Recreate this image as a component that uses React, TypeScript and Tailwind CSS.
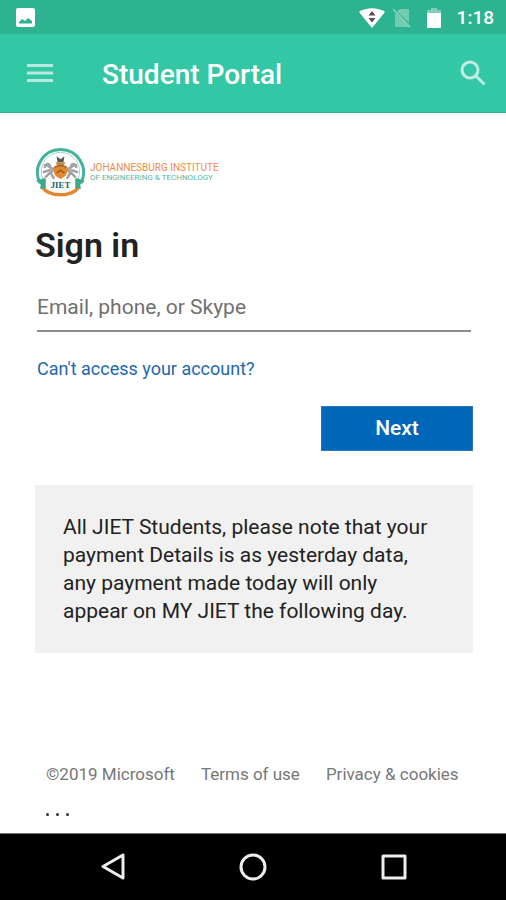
import React from "react";

const footerLinks = ["Terms of use", "Privacy & cookies"];

function PictureIcon() {
  return (
    <svg className="h-5 w-5" viewBox="0 0 20 20" aria-hidden="true">
      <path fill="#fff" fillRule="evenodd" d="M2 0h15a2 2 0 0 1 2 2v15a2 2 0 0 1-2 2H2a2 2 0 0 1-2-2V2A2 2 0 0 1 2 0ZM3 15.500h13v-2.500l-4-3-3 3-3-2-3 3Z" />
    </svg>
  );
}

function WifiIcon() {
  return (
    <svg className="h-5 w-[26px]" viewBox="0 0 26 20" aria-hidden="true">
      <path fill="#fff" d="M0 4C7-1 19-1 26 4L13 20Z" />
      <path fill="#5b4a50" d="M9.500 7.500 13 3l3.500 4.500ZM9.500 10h7l-3.500 4.500Z" />
    </svg>
  );
}

function NoSimIcon() {
  return (
    <svg className="h-5 w-[18px]" viewBox="0 0 18 20" aria-hidden="true">
      <path fill="#73cbb2" d="M7 1h9v14L4 3.500ZM2 5l14 13v1H2Z" />
      <path stroke="#8ad5c0" strokeWidth="1.500" d="M0 1l17 18" />
    </svg>
  );
}

function BatteryIcon() {
  return (
    <svg className="h-5 w-[14px]" viewBox="0 0 14 20" aria-hidden="true">
      <path fill="#82d0bb" d="M4 0h6v2h4v4H0V2h4Z" />
      <path fill="#fff" d="M0 5h14v14a1 1 0 0 1-1 1H1a1 1 0 0 1-1-1Z" />
    </svg>
  );
}

function Crest() {
  return (
    <svg className="h-[51px] w-[51px] shrink-0" viewBox="0 0 52 51" aria-hidden="true">
      <circle cx="26" cy="25" r="22" fill="#fff" />
      <path d="M5 36A23.500 23.500 0 1 1 47 36" fill="none" stroke="#45b29a" strokeWidth="3" />
      <path d="M8 32A19.500 19.500 0 1 1 44 32" fill="none" stroke="#9cd6c8" strokeWidth="1" />
      <path d="M7 40c8 11 30 11 38 0" fill="none" stroke="#e2852f" strokeWidth="3.500" />
      <path d="M1 34l9-3 3 4v6l-8 1 1-4ZM51 34l-9-3-3 4v6l8 1-1-4Z" fill="#3fa98f" />
      <g fill="none" stroke="#a2a2a6" strokeWidth="2.500" strokeLinecap="round">
        <path d="M10 20c2-5 6-3 5 0l4 2-3 4 3 5M9 25l6-2M11 30l4-4M10 18l4 1" />
        <path d="M42 20c-2-5-6-3-5 0l-4 2 3 4-3 5M43 25l-6-2M41 30l-4-4M42 18l-4 1" />
      </g>
      <path d="M22 9l4 3 4-3-1 6h-6Z" fill="#555" />
      <path d="M21 15h10l-2 4h-6Z" fill="#b98b4d" />
      <path d="M19 20c4-3 10-3 14 0 1 7-2 10-7 12-5-2-8-5-7-12Z" fill="#e58a2c" />
      <path d="M20 20c4-2 8-2 12 0M22 26l4-3 4 3" fill="none" stroke="#8a5a31" strokeWidth="1.500" />
      <path d="M11 33q15 3 30 0v8q-15 3-30 0Z" fill="#fff" />
      <text x="26" y="41" textAnchor="middle" fontSize="9" fontWeight="700" fill="#285d58" fontFamily="Liberation Serif, serif">JIET</text>
    </svg>
  );
}

export default function App() {
  return (
    <div className="flex min-h-screen flex-col bg-white font-['Roboto',sans-serif] text-[#222]">
      <div className="flex h-[34px] items-center justify-between bg-[#2eb392] pt-0.5 pr-3 pl-4 text-white">
        <PictureIcon />
        <div className="flex items-center">
          <WifiIcon />
          <div className="ml-2 flex"><NoSimIcon /></div>
          <div className="ml-4 flex"><BatteryIcon /></div>
          <span className="ml-4 text-[19px] leading-6 font-medium">1:18</span>
        </div>
      </div>

      <header className="flex h-[79px] items-center border-b border-[#2bb795] bg-[#33c7a6] px-5">
        <button type="button" aria-label="Menu" className="flex w-10 justify-center">
          <svg className="h-5 w-[26px]" viewBox="0 0 26 20" aria-hidden="true">
            <path stroke="#b9eadf" strokeWidth="3" d="M0 2.500h26M0 10h26M0 17.500h26" />
          </svg>
        </button>
        <h1 className="ml-[42px] flex-1 pt-1 text-[28px] leading-8 font-medium text-white">Student Portal</h1>
        <button type="button" aria-label="Search" className="flex">
          <svg className="h-[26px] w-[26px]" viewBox="0 0 26 26" fill="none" stroke="#c0ece1" strokeWidth="3" aria-hidden="true">
            <circle cx="10" cy="10" r="8" />
            <path d="m16 16 8.500 8.500" />
          </svg>
        </button>
      </header>

      <main className="flex flex-1 flex-col pt-[34px] pr-[33px] pl-[35px]">
        <div className="flex items-center gap-1">
          <Crest />
          <p className="text-[8px] leading-[10px] whitespace-nowrap text-[#54b7a3]">
            <span className="block text-[10px] text-[#ee8c4b]">JOHANNESBURG INSTITUTE</span>
            OF ENGINEERING &amp; TECHNOLOGY
          </p>
        </div>

        <form onSubmit={(event) => event.preventDefault()}>
          <h2 className="mt-6 text-[34px] leading-[46px] font-semibold">Sign in</h2>
          <div className="mx-0.5 mt-4">
            <input
              type="text"
              aria-label="Email, phone, or Skype"
              placeholder="Email, phone, or Skype"
              className="block h-12 w-full border-b-2 border-[#8c8c8c] text-[21px] outline-none placeholder:text-[#707070]"
            />
            <a href="#account" className="mt-[25px] block text-[18px] leading-6 text-[#2268ad]">Can't access your account?</a>
          </div>
          <button type="submit" className="mt-[25px] ml-auto block h-[45px] w-[152px] border border-[#2a78c4] bg-[#0067b8] text-[21px] font-medium text-white">
            Next
          </button>
        </form>

        <p className="mt-[34px] bg-[#f1f1f1] p-7 text-[21px] leading-7">
          All JIET Students, please note that your payment Details is as yesterday data, any payment made today will only appear on MY JIET the following day.
        </p>

        <footer className="mt-auto px-[11px] pt-8 pb-[11px] text-[17px] leading-6 text-[#777]">
          <div className="flex gap-[26px] whitespace-nowrap">
            <span>©2019 Microsoft</span>
            {footerLinks.map((label) => (
              <a key={label} href="#legal">{label}</a>
            ))}
          </div>
          <button type="button" aria-label="More options" className="mt-5 flex h-4 items-center gap-[7px]">
            <i className="h-[3px] w-[3px] rounded-full bg-[#333]" />
            <i className="h-[3px] w-[3px] rounded-full bg-[#333]" />
            <i className="h-[3px] w-[3px] rounded-full bg-[#333]" />
          </button>
        </footer>
      </main>

      <nav className="flex h-[67px] items-center justify-center gap-[114px] border-t border-[#777] bg-black">
        <button type="button" aria-label="Back">
          <svg className="h-7 w-[26px]" viewBox="0 0 26 28" fill="none" stroke="#eee" strokeWidth="3" strokeLinejoin="round" aria-hidden="true">
            <path d="M24 2v23L4 13.500Z" />
          </svg>
        </button>
        <button type="button" aria-label="Home">
          <svg className="h-7 w-7" viewBox="0 0 28 28" fill="none" stroke="#eee" strokeWidth="3" aria-hidden="true">
            <circle cx="14" cy="14" r="12" />
          </svg>
        </button>
        <button type="button" aria-label="Recent apps">
          <svg className="h-[26px] w-[26px]" viewBox="0 0 26 26" fill="none" stroke="#eee" strokeWidth="3" strokeLinejoin="round" aria-hidden="true">
            <path d="M2 2h22v22H2Z" />
          </svg>
        </button>
      </nav>
    </div>
  );
}
